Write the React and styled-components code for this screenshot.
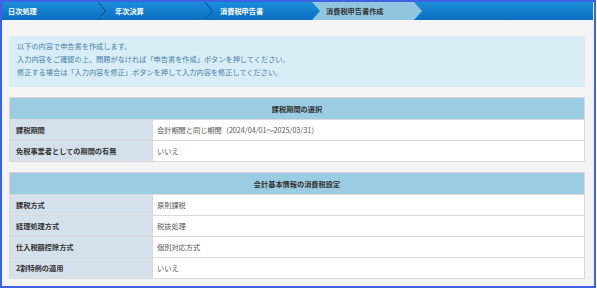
import React from "react";
import styled, { createGlobalStyle } from "styled-components";

const Global = createGlobalStyle`
  html, body { margin: 0; padding: 0; background: #ffffff; }
  body { font-family: "Noto Sans CJK JP", "Noto Sans", sans-serif; }
  * { box-sizing: border-box; }
`;

const Frame = styled.div`
  width: 596px;
  height: 288px;
  border: 2px solid #3d62e4;
  background: #f4f4f4;
  display: flex;
  flex-direction: column;
`;

const Bar = styled.nav`
  height: 18px;
  margin-right: 1px;
  display: flex;
  align-items: stretch;
  background: linear-gradient(#1b8ed9, #0b6ec0);
`;

const Crumb = styled.div`
  width: ${(p) => p.$w}px;
  padding-left: ${(p) => p.$pl}px;
  display: flex;
  align-items: center;
  color: #ffffff;
  font-size: 7.2px;
  font-weight: 700;
  white-space: nowrap;
`;

const ActiveCrumb = styled.div`
  width: 110px;
  padding-left: 14px;
  display: flex;
  align-items: center;
  color: #333333;
  font-size: 7.2px;
  font-weight: 700;
  white-space: nowrap;
  background: #8fc6de;
  clip-path: polygon(0 0, 102px 0, 110px 50%, 102px 100%, 0 100%, 8px 50%);
`;

const Sep = styled.svg`
  width: 9px;
  height: 18px;
  flex: none;
`;

const Chevron = () => (
  <Sep viewBox="0 0 9 18">
    <polyline points="0,0 8,9 0,18" fill="none" stroke="#0a5aa3" strokeWidth="1.2" />
    <polyline points="1,0 9,9 1,18" fill="none" stroke="#3a9de0" strokeWidth="0.6" opacity="0.6" />
  </Sep>
);

const Content = styled.main`
  flex: 1;
  padding: 16px 9px 0 7px;
  display: flex;
  flex-direction: column;
  gap: 10px;
`;

const Notice = styled.div`
  background: #d9edf7;
  color: #4582a9;
  font-size: 7.2px;
  line-height: 13px;
  padding: 4px 8px 8px 8px;
  height: 51px;
`;

const Table = styled.section`
  border: 1px solid #d9d9d9;
  background: #ffffff;
`;

const Head = styled.div`
  height: 21px;
  background: #9bcde2;
  color: #333333;
  font-size: 7.2px;
  font-weight: 700;
  display: flex;
  align-items: center;
  justify-content: center;
`;

const Row = styled.div`
  display: grid;
  grid-template-columns: 143px 1fr;
  height: 21px;
  border-top: 1px solid #dadada;
`;

const Label = styled.div`
  background: #d4e0ea;
  color: #333333;
  font-size: 7.2px;
  font-weight: 700;
  padding-left: 6px;
  display: flex;
  align-items: center;
  border-right: 1px solid #dadada;
`;

const Value = styled.div`
  background: #ffffff;
  color: #555555;
  font-size: 7.2px;
  padding-left: 4px;
  display: flex;
  align-items: center;
`;

const sections = [
  {
    title: "課税期間の選択",
    rows: [
      ["課税期間", "会計期間と同じ期間（2024/04/01～2025/03/31）"],
      ["免税事業者としての期間の有無", "いいえ"],
    ],
  },
  {
    title: "会計基本情報の消費税設定",
    rows: [
      ["課税方式", "原則課税"],
      ["経理処理方式", "税抜処理"],
      ["仕入税額控除方式", "個別対応方式"],
      ["2割特例の適用", "いいえ"],
    ],
  },
];

export default function App() {
  return (
    <>
      <Global />
      <Frame>
        <Bar>
          <Crumb $w={96} $pl={6}>日次処理</Crumb>
          <Chevron />
          <Crumb $w={98} $pl={8}>年次決算</Crumb>
          <Chevron />
          <Crumb $w={98} $pl={6}>消費税申告書</Crumb>
          <ActiveCrumb>消費税申告書作成</ActiveCrumb>
        </Bar>
        <Content>
          <Notice>
            <div>以下の内容で申告書を作成します。</div>
            <div>入力内容をご確認の上、問題がなければ「申告書を作成」ボタンを押してください。</div>
            <div>修正する場合は「入力内容を修正」ボタンを押して入力内容を修正してください。</div>
          </Notice>
          {sections.map((s) => (
            <Table key={s.title}>
              <Head>{s.title}</Head>
              {s.rows.map(([l, v]) => (
                <Row key={l}>
                  <Label>{l}</Label>
                  <Value>{v}</Value>
                </Row>
              ))}
            </Table>
          ))}
        </Content>
      </Frame>
    </>
  );
}
